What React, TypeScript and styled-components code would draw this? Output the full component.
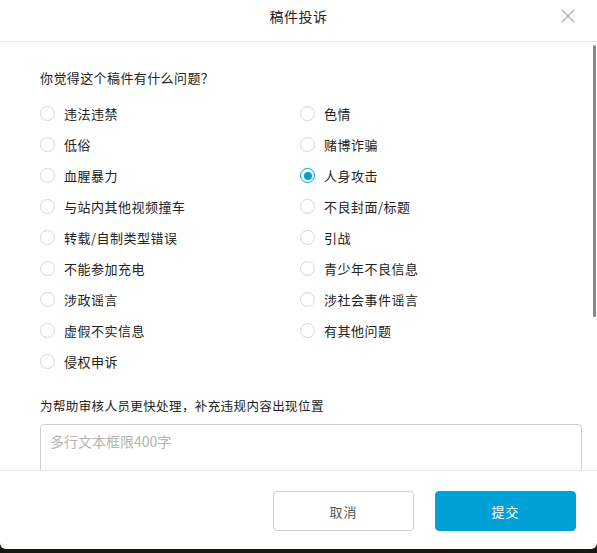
import React, { useState } from 'react';
import styled, { createGlobalStyle } from 'styled-components';

const GlobalStyle = createGlobalStyle`
	html, body {
		margin: 0;
		padding: 0;
		background: #1b1511;
	}
	body {
		font-family: 'Noto Sans CJK SC', 'Noto Sans', sans-serif;
		color: #212121;
	}
`;

const REASONS = [
	'违法违禁',
	'色情',
	'低俗',
	'赌博诈骗',
	'血腥暴力',
	'人身攻击',
	'与站内其他视频撞车',
	'不良封面/标题',
	'转载/自制类型错误',
	'引战',
	'不能参加充电',
	'青少年不良信息',
	'涉政谣言',
	'涉社会事件谣言',
	'虚假不实信息',
	'有其他问题',
	'侵权申诉',
];

const Modal = styled.div`
	display: flex;
	flex-direction: column;
	width: 597px;
	height: 549px;
	background: #fff;
	border-radius: 0 0 6px 6px;
	overflow: hidden;
`;

const Header = styled.div`
	position: relative;
	display: flex;
	align-items: center;
	justify-content: center;
	height: 41px;
	border-bottom: 1px solid #e7e7e7;
	flex-shrink: 0;
`;

const Title = styled.h3`
	margin: 0 0 9px;
	font-size: 14px;
	font-weight: 400;
	letter-spacing: 0.5px;
	color: #222;
`;

const Close = styled.button`
	position: absolute;
	right: 22px;
	top: 9px;
	width: 14px;
	height: 14px;
	padding: 0;
	border: none;
	background: none;
	cursor: pointer;
`;

const Body = styled.div`
	position: relative;
	flex: 1;
	overflow: hidden;
	padding: 26px 15px 0 40px;
`;

const Thumb = styled.div`
	position: absolute;
	right: 1px;
	top: 3px;
	width: 3px;
	height: 272px;
	border-radius: 2px;
	background: #888;
`;

const Label = styled.p<{ $size?: number }>`
	margin: 0;
	font-size: ${(p) => p.$size || 13}px;
	line-height: 20px;
	letter-spacing: 0.4px;
	color: #222;
`;

const Grid = styled.div`
	display: grid;
	grid-template-columns: 260px 260px;
	grid-auto-rows: 31px;
	margin-top: 10px;
`;

const Option = styled.label`
	display: flex;
	align-items: center;
	gap: 9px;
	font-size: 13px;
	letter-spacing: 0.5px;
	color: #222;
	cursor: pointer;
`;

const Radio = styled.span<{ $checked: boolean }>`
	display: flex;
	align-items: center;
	justify-content: center;
	box-sizing: border-box;
	width: 15px;
	height: 15px;
	border-radius: 50%;
	border: 1px solid ${(p) => (p.$checked ? '#00a1d6' : '#d6d6d6')};

	&::after {
		content: '';
		display: ${(p) => (p.$checked ? 'block' : 'none')};
		width: 8px;
		height: 8px;
		border-radius: 50%;
		background: #00a1d6;
	}
`;

const Section = styled.div`
	margin-top: 19px;
`;

const TextArea = styled.textarea`
	display: block;
	box-sizing: border-box;
	width: 542px;
	height: 100px;
	margin-top: 8px;
	padding: 6px 9px;
	border: 1px solid #d0d0d0;
	border-radius: 4px;
	resize: none;
	font-family: 'Noto Sans CJK SC', sans-serif;
	font-size: 14px;
	line-height: 20px;
	color: #222;
	outline: none;

	&::placeholder {
		color: #b4b4b4;
	}
`;

const Footer = styled.div`
	display: flex;
	align-items: center;
	justify-content: flex-end;
	gap: 21px;
	height: 78px;
	padding-right: 21px;
	border-top: 1px solid #e7e7e7;
	flex-shrink: 0;
`;

const Button = styled.button<{ $primary?: boolean }>`
	box-sizing: border-box;
	width: 141px;
	height: 40px;
	margin-top: 2px;
	border-radius: 4px;
	border: 1px solid ${(p) => (p.$primary ? '#00a1d6' : '#cfcfcf')};
	background: ${(p) => (p.$primary ? '#00a1d6' : '#fff')};
	color: ${(p) => (p.$primary ? '#fff' : '#555')};
	font-family: 'Noto Sans CJK SC', sans-serif;
	font-size: 13px;
	letter-spacing: 1px;
	cursor: pointer;
`;

export default function App() {
	const [selected, setSelected] = useState('人身攻击');

	return (
		<>
			<GlobalStyle />
			<Modal>
				<Header>
					<Title>稿件投诉</Title>
					<Close aria-label="关闭">
						<svg width="14" height="14" viewBox="0 0 14 14">
							<path d="M1 1L13 13M13 1L1 13" stroke="#a8a8a8" strokeWidth="1.1" />
						</svg>
					</Close>
				</Header>
				<Body>
					<Thumb />
					<Label>你觉得这个稿件有什么问题？</Label>
					<Grid>
						{REASONS.map((r) => (
							<Option key={r} onClick={() => setSelected(r)}>
								<Radio $checked={selected === r} />
								{r}
							</Option>
						))}
					</Grid>
					<Section>
						<Label $size={12.5}>为帮助审核人员更快处理，补充违规内容出现位置</Label>
						<TextArea placeholder="多行文本框限400字" />
					</Section>
				</Body>
				<Footer>
					<Button>取消</Button>
					<Button $primary>提交</Button>
				</Footer>
			</Modal>
		</>
	);
}
